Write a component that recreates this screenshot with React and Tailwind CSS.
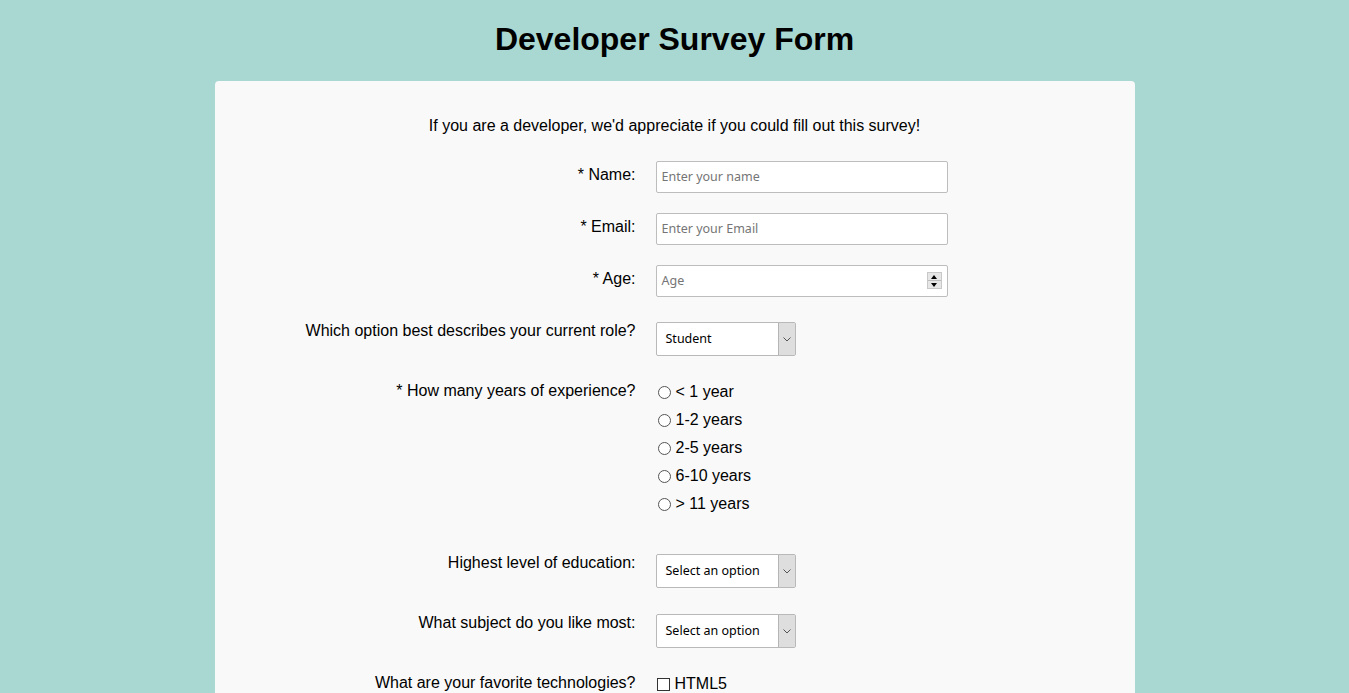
import React from "react"

const font = { fontFamily: '"Liberation Sans", Arial, sans-serif' }

const Label = ({ children, pt = "pt-[1px]" }) => (
  <div className={`w-[421px] shrink-0 text-right text-[16px] leading-[18px] text-black ${pt}`}>{children}</div>
)

const TextInput = ({ placeholder, spinner }) => (
  <div className="relative ml-[20px] flex h-[32px] w-[292px] items-center rounded-[2px] border border-[#bdbdbd] bg-white pl-[5px]">
    <span className="font-['Noto_Sans',sans-serif] text-[12.5px] text-[#757575]">{placeholder}</span>
    {spinner && (
      <div className="absolute right-[5px] top-[6px] flex h-[17px] w-[15px] flex-col border border-[#c8c8c8] bg-[#e6e6e6]">
        <div className="flex flex-1 items-center justify-center border-b border-[#bbb]">
          <div className="h-0 w-0 border-x-[3px] border-b-[4px] border-x-transparent border-b-black" />
        </div>
        <div className="flex flex-1 items-center justify-center">
          <div className="h-0 w-0 border-x-[3px] border-t-[4px] border-x-transparent border-t-black" />
        </div>
      </div>
    )}
  </div>
)

const Select = ({ value }) => (
  <div className="ml-[20px] mt-[1px] flex h-[34px] w-[140px] items-stretch rounded-[2px] border border-[#b9b9b9] bg-white">
    <div className="flex flex-1 items-center pl-[9px] font-['Noto_Sans',sans-serif] text-[12.5px] text-black">{value}</div>
    <div className="flex w-[17px] items-center justify-center border-l border-[#b5b5b5] bg-[#dedede]">
      <svg width="8" height="5" viewBox="0 0 8 5">
        <path d="M0.5 0.5 L4 4 L7.5 0.5" fill="none" stroke="#555" strokeWidth="1" />
      </svg>
    </div>
  </div>
)

const Radio = ({ label }) => (
  <div className="flex h-[28px] items-center">
    <div className="ml-[2px] h-[13px] w-[13px] rounded-full border border-[#555] bg-white" />
    <span className="ml-[5px] text-[16px] leading-[18px]">{label}</span>
  </div>
)

export default function App() {
  return (
    <div className="min-h-[693px] bg-[#a9d8d3] pb-10 text-black" style={font}>
      <h1 className="pt-[21px] pb-[23px] text-center text-[32px] font-bold leading-[37px]">Developer Survey Form</h1>
      <div className="mx-auto w-[920px] rounded-[4px] bg-[#f9f9f9] pt-[36px] pb-[40px]">
        <p className="text-center text-[16px] leading-[18px]">If you are a developer, we'd appreciate if you could fill out this survey!</p>

        {/* text inputs */}
        <div className="mt-[26px] flex items-start">
          <Label pt="pt-[5px]">* Name:</Label>
          <TextInput placeholder="Enter your name" />
        </div>
        <div className="mt-[20px] flex items-start">
          <Label pt="pt-[5px]">* Email:</Label>
          <TextInput placeholder="Enter your Email" />
        </div>
        <div className="mt-[20px] flex items-start">
          <Label pt="pt-[5px]">* Age:</Label>
          <TextInput placeholder="Age" spinner />
        </div>

        <div className="mt-[24px] flex items-start">
          <Label>Which option best describes your current role?</Label>
          <Select value="Student" />
        </div>

        {/* radios */}
        <div className="mt-[25px] flex items-start">
          <Label>* How many years of experience?</Label>
          <div className="ml-[20px] -mt-[3px] flex flex-col">
            <Radio label="< 1 year" />
            <Radio label="1-2 years" />
            <Radio label="2-5 years" />
            <Radio label="6-10 years" />
            <Radio label="> 11 years" />
          </div>
        </div>

        <div className="mt-[35px] flex items-start">
          <Label>Highest level of education:</Label>
          <Select value="Select an option" />
        </div>

        <div className="mt-[25px] flex items-start">
          <Label>What subject do you like most:</Label>
          <Select value="Select an option" />
        </div>

        {/* checkboxes */}
        <div className="mt-[25px] flex items-start">
          <Label>What are your favorite technologies?</Label>
          <div className="ml-[20px] flex flex-col pt-[1px]">
            {["HTML5", "CSS3", "JavaScript", "React", "Node.js"].map((t) => (
              <div key={t} className="flex h-[20px] items-center">
                <div className="ml-[1px] h-[13px] w-[13px] border border-[#333] bg-white" />
                <span className="ml-[5px] text-[16px] leading-[18px]">{t}</span>
              </div>
            ))}
          </div>
        </div>
      </div>
    </div>
  )
}
